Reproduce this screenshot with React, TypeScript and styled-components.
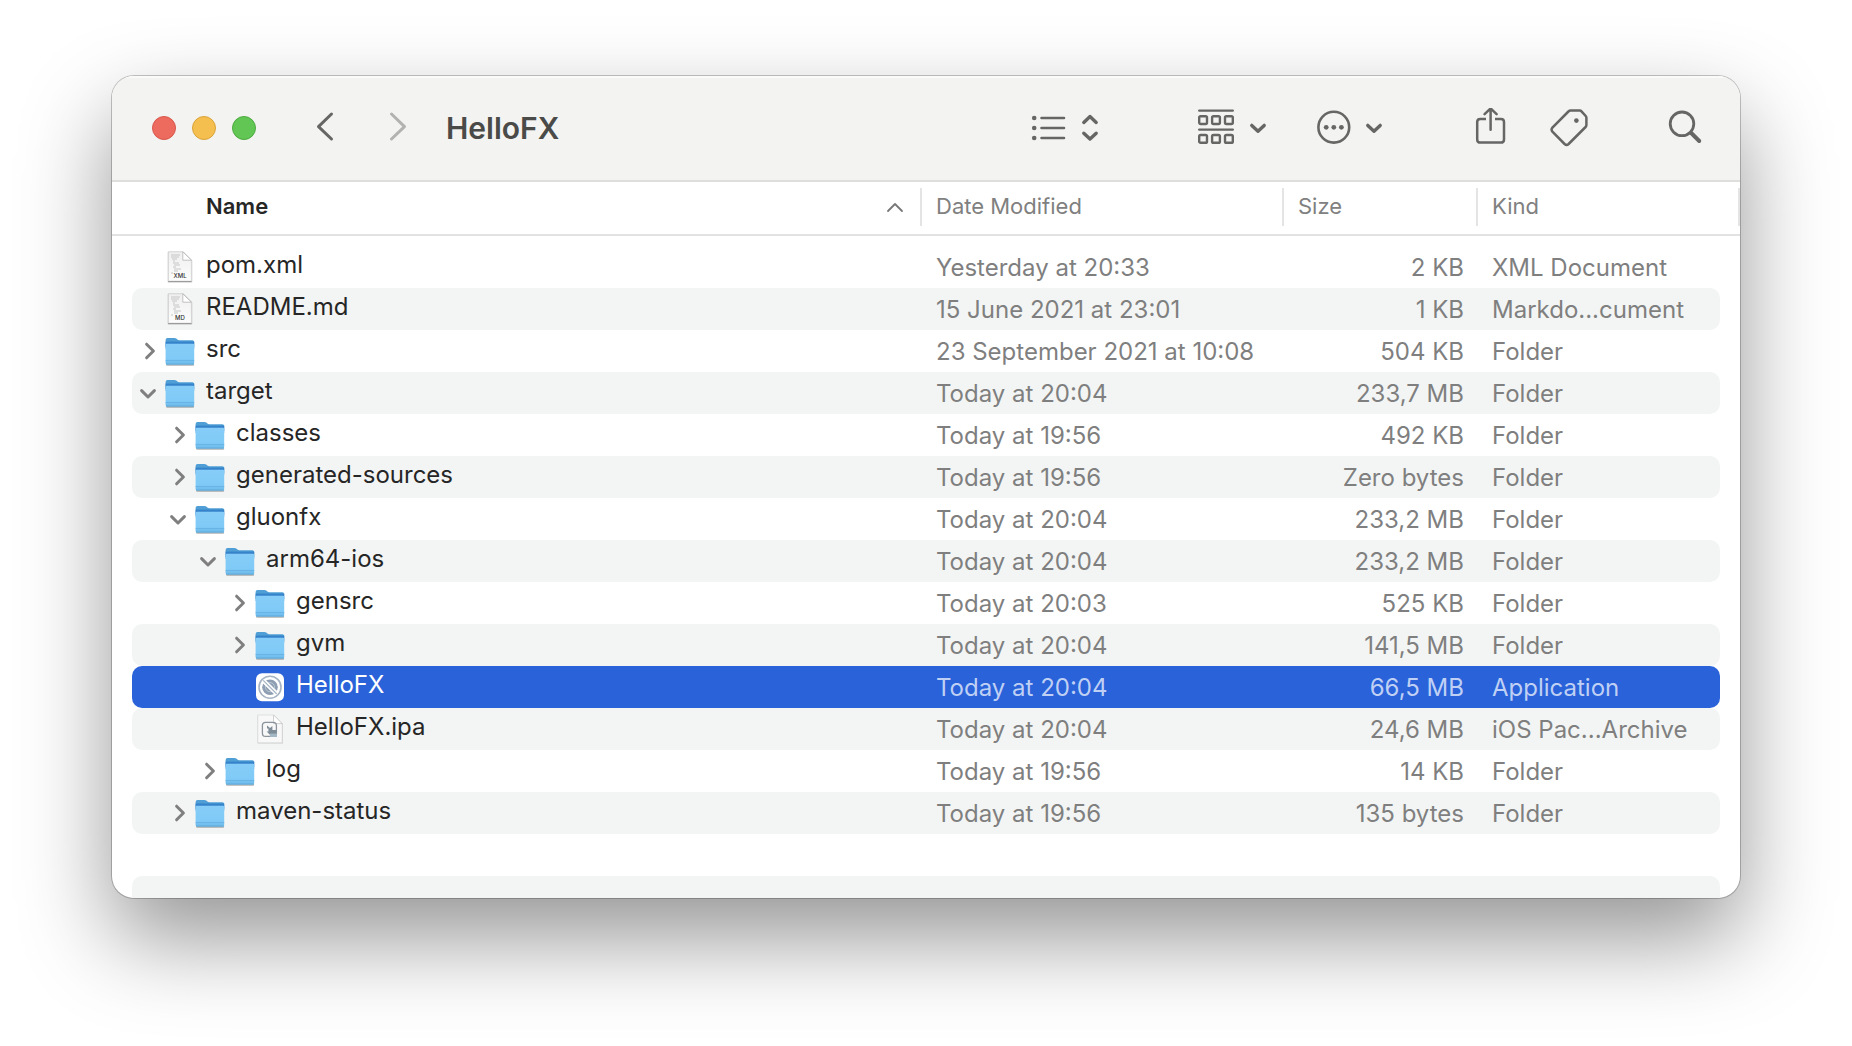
import React from "react";
import styled, { createGlobalStyle, css } from "styled-components";

const GlobalStyle = createGlobalStyle`
  *, *::before, *::after { box-sizing: border-box; }
  html, body { margin: 0; background: #ffffff; }
  body { font-family: Inter, "Liberation Sans", sans-serif; color: #262626; }
`;

const Desktop = styled.main`
  display: flex;
  height: 100vh;
  padding: 76px 112px 148px;
`;

const FinderWindow = styled.section`
  display: flex;
  flex: 1;
  min-width: 0;
  flex-direction: column;
  overflow: hidden;
  border-radius: 22px;
  background: #ffffff;
  box-shadow:
    0 0 0 1px rgba(0, 0, 0, 0.22),
    0 40px 90px rgba(0, 0, 0, 0.42);
`;

const Toolbar = styled.header`
  display: flex;
  flex: none;
  align-items: center;
  height: 106px;
  padding: 0 34px 0 40px;
  border-bottom: 2px solid #dededd;
  background: #f3f3f1;
  box-shadow: inset 0 2px 0 #fafaf9;
`;

const TrafficLights = styled.div`
  display: flex;
  gap: 16px;
`;

const Light = styled.button<{ $fill: string; $rim: string }>`
  width: 24px;
  height: 24px;
  padding: 0;
  border: 1px solid ${(p) => p.$rim};
  border-radius: 50%;
  background: ${(p) => p.$fill};
`;

const NavButtons = styled.nav`
  display: flex;
  gap: 32px;
  margin-left: 48px;
`;

const iconButton = css`
  display: flex;
  align-items: center;
  padding: 0;
  border: 0;
  background: none;
  color: #666665;

  svg {
    display: block;
    flex: none;
  }
`;

const NavButton = styled.button`
  ${iconButton}
  width: 42px;
  justify-content: center;

  &:disabled {
    color: #b2b2b1;
  }
`;

const Title = styled.h1`
  flex: 1;
  margin: 0 0 0 26px;
  font-size: 30px;
  font-weight: 600;
  line-height: 40px;
  color: #4a4a49;
`;

const Tools = styled.div`
  display: flex;
`;

const ToolButton = styled.button<{ $before?: number }>`
  ${iconButton}
  gap: 12px;
  margin-left: ${(p) => p.$before ?? 0}px;
`;

const FileTable = styled.table`
  display: flex;
  flex: 1;
  min-height: 0;
  flex-direction: column;
  overflow: hidden;
`;

const TableHead = styled.thead`
  display: block;
  flex: none;
  padding: 6px 0 8px;
  border-bottom: 2px solid #e2e2e2;
`;

const HeadRow = styled.tr`
  display: grid;
  grid-template-columns: minmax(0, 1fr) 362px 194px 262px;
`;

const HeadCell = styled.th<{ $name?: boolean }>`
  height: 38px;
  padding: 0 14px 0 ${(p) => (p.$name ? 94 : 14)}px;
  border-right: 2px solid #e4e4e4;
  text-align: left;
`;

const SortButton = styled.button<{ $active?: boolean }>`
  display: flex;
  align-items: center;
  justify-content: space-between;
  width: 100%;
  height: 36px;
  padding: 0 2px 0 0;
  border: 0;
  background: none;
  font: inherit;
  font-size: 22px;
  font-weight: ${(p) => (p.$active ? 600 : 400)};
  line-height: 36px;
  color: ${(p) => (p.$active ? "#262626" : "#808080")};

  svg {
    color: #787878;
  }
`;

const TableBody = styled.tbody`
  display: block;
  padding: 10px 20px 0;
`;

const FileRow = styled.tr<{ $selected?: boolean }>`
  display: grid;
  grid-template-columns: minmax(0, 1fr) 362px 194px 242px;
  height: 42px;
  border-radius: 10px;
  color: #7f7f7f;

  &:nth-child(even) {
    background: #f3f5f4;
  }

  ${(p) =>
    p.$selected &&
    css`
      && {
        background: #2962d9;
        color: #bfd0f4;
      }
    `}
`;

const NameCell = styled.td<{ $depth: number; $selected?: boolean }>`
  display: flex;
  align-items: center;
  padding: 0 0 0 ${(p) => 6 + p.$depth * 30}px;
  color: ${(p) => (p.$selected ? "#ffffff" : "#262626")};
`;

const Disclosure = styled.span`
  display: flex;
  width: 26px;
  flex: none;
`;

const DisclosureButton = styled.button`
  ${iconButton}
  color: #7f7f7f;
`;

const FileName = styled.span`
  padding: 0 0 4px 10px;
  font-size: 24px;
  line-height: 38px;
  white-space: nowrap;
`;

const DataCell = styled.td<{ $align?: "right" }>`
  overflow: hidden;
  padding: 0 14px;
  font-size: 24px;
  line-height: 44px;
  text-align: ${(p) => p.$align ?? "left"};
  white-space: nowrap;
`;

const stroke = {
  fill: "none",
  stroke: "currentColor",
  strokeLinecap: "round",
  strokeLinejoin: "round",
} as const;

const BackIcon = () => (
  <svg width="24" height="36" viewBox="0 0 24 36" strokeWidth="3" {...stroke}>
    <path d="M18.5 4L5.5 16.6L18.5 29" />
  </svg>
);

const ForwardIcon = () => (
  <svg width="24" height="36" viewBox="0 0 24 36" strokeWidth="3" {...stroke}>
    <path d="M4.5 4L17.5 16.6L4.5 29" />
  </svg>
);

const ListIcon = () => (
  <svg width="40" height="40" viewBox="0 0 40 40" strokeWidth="2.6" {...stroke}>
    <path d="M13.5 10H36M13.5 20H36M13.5 30H36" />
    <g fill="currentColor" stroke="none">
      <circle cx="6.2" cy="10" r="2.3" />
      <circle cx="6.2" cy="20" r="2.3" />
      <circle cx="6.2" cy="30" r="2.3" />
    </g>
  </svg>
);

const UpDownIcon = () => (
  <svg width="20" height="40" viewBox="0 0 20 40" strokeWidth="3.4" {...stroke}>
    <path d="M3.8 14.4L10 8.6L16.2 14.4M3.8 25.2L10 31L16.2 25.2" />
  </svg>
);

const MenuArrowIcon = () => (
  <svg width="20" height="40" viewBox="0 0 20 40" strokeWidth="3.4" {...stroke}>
    <path d="M3.8 17.4L10 23.2L16.2 17.4" />
  </svg>
);

const GroupIcon = () => (
  <svg width="40" height="40" viewBox="0 0 40 40" strokeWidth="2.4" {...stroke}>
    <path d="M3.2 2.6H36.8M3.2 21.6H36.8" />
    <rect x="3.2" y="8.2" width="7.8" height="7.8" rx="1.4" />
    <rect x="16.1" y="8.2" width="7.8" height="7.8" rx="1.4" />
    <rect x="29" y="8.2" width="7.8" height="7.8" rx="1.4" />
    <rect x="3.2" y="27" width="7.8" height="7.8" rx="1.4" />
    <rect x="16.1" y="27" width="7.8" height="7.8" rx="1.4" />
    <rect x="29" y="27" width="7.8" height="7.8" rx="1.4" />
  </svg>
);

const MoreIcon = () => (
  <svg width="40" height="40" viewBox="0 0 40 40" strokeWidth="2.6" {...stroke}>
    <circle cx="21.8" cy="19.2" r="15.4" />
    <g fill="currentColor" stroke="none">
      <circle cx="14.2" cy="19.3" r="2.4" />
      <circle cx="21.8" cy="19.3" r="2.4" />
      <circle cx="29.4" cy="19.3" r="2.4" />
    </g>
  </svg>
);

const ShareIcon = () => (
  <svg width="40" height="40" viewBox="0 0 40 40" strokeWidth="2.5" {...stroke}>
    <path
      d="M16 11H10.2Q7.2 11 7.2 14V31.4Q7.2 34.6 10.4 34.6H30.8Q34 34.6 34 31.4V14Q34 11 31 11H25"
      strokeLinecap="butt"
    />
    <path d="M20.6 21.8V1.4M14.6 6.2L20.6 .4L26.6 6.2" />
  </svg>
);

const TagIcon = () => (
  <svg width="40" height="40" viewBox="0 0 40 40" strokeWidth="2.5" {...stroke}>
    <path d="M20.6 2.6H29.8Q30.8 2.6 31.5 3.4L35.7 8Q36.4 8.8 36.4 9.8V17Q36.4 18.2 35.6 19L18.6 36Q16.6 37.8 14.6 36L2.4 23.6Q.8 21.6 2.4 19.6L18.4 3.5Q19.4 2.6 20.6 2.6Z" />
    <circle cx="26.4" cy="12.6" r="2.3" fill="currentColor" stroke="none" />
  </svg>
);

const SearchIcon = () => (
  <svg width="40" height="40" viewBox="0 0 40 40" {...stroke}>
    <circle cx="16" cy="15.8" r="11.8" strokeWidth="2.8" />
    <path d="M25.2 25L33.2 33" strokeWidth="4" />
  </svg>
);

const SortUpIcon = () => (
  <svg width="20" height="20" viewBox="0 0 20 20" strokeWidth="1.8" {...stroke}>
    <path d="M4 15L11 8L18 15" />
  </svg>
);

const DisclosureIcon = ({ open }: { open: boolean }) => (
  <svg width="20" height="20" viewBox="0 0 20 20" strokeWidth="3" {...stroke}>
    <path d={open ? "M3.6 7.6L10 14L16.4 7.6" : "M8.6 3.2L15.4 10L8.6 16.8"} />
  </svg>
);

const FolderIcon = () => (
  <svg width="32" height="32" viewBox="0 0 32 32">
    <path d="M2 29.4H30.2V29.8Q30.2 30.8 29 30.8H3.2Q2 30.8 2 29.8Z" fill="#000" opacity=".3" />
    <path
      d="M1.6 5Q1.6 3 3.6 3H10.4Q11.6 3 12.6 3.8L13.4 4.5Q14.2 5.2 15.4 5.2H28.4Q30.2 5.2 30.2 7V14H1.6Z"
      fill="#4f9fd6"
    />
    <path d="M1.6 6.6H30.2V12H1.6Z" fill="#3683cb" />
    <path
      d="M1.6 10.2Q1.6 8.8 3 8.8H28.8Q30.2 8.8 30.2 10.2V28Q30.2 29.6 28.4 29.6H3.4Q1.6 29.6 1.6 28Z"
      fill="url(#folderFront)"
    />
    <path d="M1.6 25.6H30.2" stroke="#62afe0" strokeWidth=".8" />
    <path d="M2 29.2H30" stroke="#549dce" strokeWidth=".8" />
  </svg>
);

const IconGradients = () => (
  <svg width="0" height="0" aria-hidden="true" display="block">
    <defs>
      <linearGradient id="folderFront" x1="0" y1="0" x2="0" y2="1">
        <stop offset="0" stopColor="#86cdf8" />
        <stop offset=".7" stopColor="#80caf7" />
        <stop offset="1" stopColor="#6cb9e9" />
      </linearGradient>
      <linearGradient id="paper" x1="0" y1="0" x2="0" y2="1">
        <stop offset="0" stopColor="#efefef" />
        <stop offset="1" stopColor="#fdfdfd" />
      </linearGradient>
    </defs>
  </svg>
);

const TextFileIcon = ({ label }: { label: string }) => (
  <svg width="32" height="32" viewBox="0 0 32 32">
    <path d="M4 1H19.6L28 9.4V31.2H4Z" fill="#000" stroke="#000" opacity=".1" />
    <path d="M4.4 .8H19L27.4 9.2V30.2H4.4Z" fill="url(#paper)" stroke="#c4c4c4" strokeWidth=".6" />
    <path d="M4.2 30.6H27.6" stroke="#8d8d8d" strokeWidth=".9" />
    <path
      d="M7 4H16M7 6H15M8 8H13M9 10H11M9 12H15M10 14H16M9 16H12M10 18H17M10 20H14M7 22H9"
      stroke="#c6c6c6"
      fill="none"
    />
    <text x="16" y="27" textAnchor="middle" fontSize="6" fontWeight="500" fill="#333333">
      {label}
    </text>
    <path d="M18.8 .8V9.2H27.4Z" fill="#ffffff" stroke="#b4b4b4" strokeWidth=".8" />
  </svg>
);

const ArchiveIcon = () => (
  <svg width="32" height="32" viewBox="0 0 32 32">
    <path d="M3.6 2.6H20L29 11V30.6H3.6Z" fill="#000" opacity=".14" />
    <path d="M3.8 2H19.6L28.2 10.6V29.8H3.8Z" fill="#f8f8f8" stroke="#d2d2d2" strokeWidth=".6" />
    <path d="M19.6 2V10.6H28.2Z" fill="#ffffff" stroke="#c4c4c4" strokeWidth=".8" />
    <rect x="8.4" y="9.4" width="14" height="14" rx="3.2" fill="none" stroke="#8b949c" strokeWidth="1.3" />
    <path d="M13 12.4L16 15L18.4 13V17H22.2V22.6H16.6L12.6 18.4H14.4V15.6H13Z" fill="#7f8d99" />
    <path d="M16 20.6H23V24H16Z" fill="#a3b8c4" />
  </svg>
);

const AppIcon = () => (
  <svg width="32" height="32" viewBox="0 0 32 32">
    <rect x="2" y="2.2" width="28" height="28" rx="6" fill="#ffffff" />
    <circle cx="16" cy="16.2" r="11" fill="none" stroke="#a6b4c4" strokeWidth="1.6" />
    <circle cx="16" cy="16.2" r="7.8" fill="#8e9fb3" />
    <circle cx="16" cy="16.2" r="4.6" fill="none" stroke="#b9c5d1" strokeWidth="1" />
    <path d="M9 9.4L23 23" stroke="#ffffff" strokeWidth="4.4" />
    <path d="M9.2 9.4L22.8 23" stroke="#a6b4c4" strokeWidth="1.2" />
  </svg>
);

type Kind = "folder" | "xml" | "md" | "app" | "ipa";

interface Entry {
  name: string;
  depth: number;
  icon: Kind;
  open?: boolean;
  date: string;
  size: string;
  kind: string;
  selected?: boolean;
}

const entries: Entry[] = [
  { name: "pom.xml", depth: 0, icon: "xml", date: "Yesterday at 20:33", size: "2 KB", kind: "XML Document" },
  { name: "README.md", depth: 0, icon: "md", date: "15 June 2021 at 23:01", size: "1 KB", kind: "Markdo...cument" },
  { name: "src", depth: 0, icon: "folder", open: false, date: "23 September 2021 at 10:08", size: "504 KB", kind: "Folder" },
  { name: "target", depth: 0, icon: "folder", open: true, date: "Today at 20:04", size: "233,7 MB", kind: "Folder" },
  { name: "classes", depth: 1, icon: "folder", open: false, date: "Today at 19:56", size: "492 KB", kind: "Folder" },
  { name: "generated-sources", depth: 1, icon: "folder", open: false, date: "Today at 19:56", size: "Zero bytes", kind: "Folder" },
  { name: "gluonfx", depth: 1, icon: "folder", open: true, date: "Today at 20:04", size: "233,2 MB", kind: "Folder" },
  { name: "arm64-ios", depth: 2, icon: "folder", open: true, date: "Today at 20:04", size: "233,2 MB", kind: "Folder" },
  { name: "gensrc", depth: 3, icon: "folder", open: false, date: "Today at 20:03", size: "525 KB", kind: "Folder" },
  { name: "gvm", depth: 3, icon: "folder", open: false, date: "Today at 20:04", size: "141,5 MB", kind: "Folder" },
  { name: "HelloFX", depth: 3, icon: "app", date: "Today at 20:04", size: "66,5 MB", kind: "Application", selected: true },
  { name: "HelloFX.ipa", depth: 3, icon: "ipa", date: "Today at 20:04", size: "24,6 MB", kind: "iOS Pac...Archive" },
  { name: "log", depth: 2, icon: "folder", open: false, date: "Today at 19:56", size: "14 KB", kind: "Folder" },
  { name: "maven-status", depth: 1, icon: "folder", open: false, date: "Today at 19:56", size: "135 bytes", kind: "Folder" },
];

const EntryIcon = ({ icon }: { icon: Kind }) => {
  if (icon === "folder") return <FolderIcon />;
  if (icon === "app") return <AppIcon />;
  if (icon === "ipa") return <ArchiveIcon />;
  return <TextFileIcon label={icon.toUpperCase()} />;
};

const EntryRow = ({ entry }: { entry: Entry }) => (
  <FileRow $selected={entry.selected} aria-selected={entry.selected}>
    <NameCell $depth={entry.depth} $selected={entry.selected}>
      <Disclosure>
        {entry.open !== undefined && (
          <DisclosureButton aria-label={`Toggle ${entry.name}`} aria-expanded={entry.open}>
            <DisclosureIcon open={entry.open} />
          </DisclosureButton>
        )}
      </Disclosure>
      <EntryIcon icon={entry.icon} />
      <FileName>{entry.name}</FileName>
    </NameCell>
    <DataCell>{entry.date}</DataCell>
    <DataCell $align="right">{entry.size}</DataCell>
    <DataCell>{entry.kind}</DataCell>
  </FileRow>
);

export default function App() {
  return (
    <>
      <GlobalStyle />
      <Desktop>
        <FinderWindow aria-label="HelloFX">
          <Toolbar>
            <TrafficLights>
              <Light $fill="#ed6a5f" $rim="#d8574c" aria-label="Close" />
              <Light $fill="#f5bf50" $rim="#dba33a" aria-label="Minimize" />
              <Light $fill="#62c655" $rim="#4caa3f" aria-label="Zoom" />
            </TrafficLights>
            <NavButtons>
              <NavButton aria-label="Back">
                <BackIcon />
              </NavButton>
              <NavButton aria-label="Forward" disabled>
                <ForwardIcon />
              </NavButton>
            </NavButtons>
            <Title>HelloFX</Title>
            <Tools>
              <ToolButton aria-label="View as list">
                <ListIcon />
                <UpDownIcon />
              </ToolButton>
              <ToolButton $before={96} aria-label="Group items">
                <GroupIcon />
                <MenuArrowIcon />
              </ToolButton>
              <ToolButton $before={44} aria-label="More actions">
                <MoreIcon />
                <MenuArrowIcon />
              </ToolButton>
              <ToolButton $before={86} aria-label="Share">
                <ShareIcon />
              </ToolButton>
              <ToolButton $before={40} aria-label="Edit tags">
                <TagIcon />
              </ToolButton>
              <ToolButton $before={76} aria-label="Search">
                <SearchIcon />
              </ToolButton>
            </Tools>
          </Toolbar>
          <IconGradients />
          <FileTable>
            <TableHead>
              <HeadRow>
                <HeadCell $name scope="col" aria-sort="ascending">
                  <SortButton $active>
                    Name
                    <SortUpIcon />
                  </SortButton>
                </HeadCell>
                <HeadCell scope="col">
                  <SortButton>Date Modified</SortButton>
                </HeadCell>
                <HeadCell scope="col">
                  <SortButton>Size</SortButton>
                </HeadCell>
                <HeadCell scope="col">
                  <SortButton>Kind</SortButton>
                </HeadCell>
              </HeadRow>
            </TableHead>
            <TableBody>
              {entries.map((entry) => (
                <EntryRow key={entry.name} entry={entry} />
              ))}
              <FileRow aria-hidden="true" />
              <FileRow aria-hidden="true" />
            </TableBody>
          </FileTable>
        </FinderWindow>
      </Desktop>
    </>
  );
}
